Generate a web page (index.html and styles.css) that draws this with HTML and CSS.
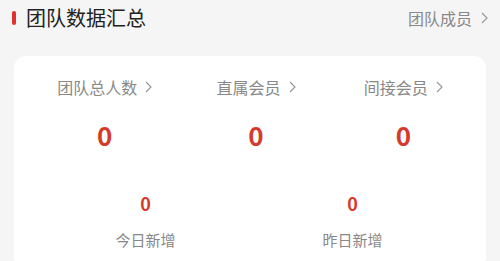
FILE: index.html
```html
<!DOCTYPE html>
<html lang="zh-CN">
<head>
<meta charset="utf-8">
<link rel="stylesheet" href="styles.css">
</head>
<body>
<div class="header">
  <div class="title"><span class="bar"></span>团队数据汇总</div>
  <div class="more">团队成员<svg class="chev" viewBox="0 0 7 12" width="7" height="12"><polyline points="1,1 6,6 1,11" fill="none" stroke="#999" stroke-width="1.2"/></svg></div>
</div>
<div class="card">
  <div class="row3">
    <div class="cell">
      <div class="label">团队总人数<svg class="chev" viewBox="0 0 7 12" width="7" height="12"><polyline points="1,1 6,6 1,11" fill="none" stroke="#999" stroke-width="1.2"/></svg></div>
      <div class="num">0</div>
    </div>
    <div class="cell">
      <div class="label">直属会员<svg class="chev" viewBox="0 0 7 12" width="7" height="12"><polyline points="1,1 6,6 1,11" fill="none" stroke="#999" stroke-width="1.2"/></svg></div>
      <div class="num">0</div>
    </div>
    <div class="cell">
      <div class="label">间接会员<svg class="chev" viewBox="0 0 7 12" width="7" height="12"><polyline points="1,1 6,6 1,11" fill="none" stroke="#999" stroke-width="1.2"/></svg></div>
      <div class="num">0</div>
    </div>
  </div>
  <div class="row2">
    <div class="cell">
      <div class="num-sm">0</div>
      <div class="label-sm">今日新增</div>
    </div>
    <div class="cell">
      <div class="num-sm">0</div>
      <div class="label-sm">昨日新增</div>
    </div>
  </div>
</div>
</body>
</html>
```
FILE: styles.css
```css
html, body {
  margin: 0;
  padding: 0;
  background: #f5f5f5;
  font-family: "Noto Sans CJK SC", "Noto Sans", sans-serif;
}
body {
  height: 261px;
  overflow: hidden;
}
.header {
  height: 36px;
  display: flex;
  align-items: center;
  justify-content: space-between;
  padding: 0 12px 0 12px;
}
.title {
  display: flex;
  align-items: center;
  font-size: 20px;
  color: #222;
  line-height: 26px;
}
.bar {
  display: inline-block;
  width: 4px;
  height: 14px;
  border-radius: 2px;
  background: #e0322a;
  margin-right: 10px;
}
.more {
  display: flex;
  align-items: center;
  font-size: 16px;
  color: #888;
  line-height: 22px;
}
.more .chev {
  margin-left: 9px;
}
.card {
  margin: 20px 14px 0 14px;
  background: #fff;
  border-radius: 12px;
  height: 212px;
}
.row3 {
  display: grid;
  grid-template-columns: repeat(3, 1fr);
  padding: 20px 8px 0 16px;
}
.cell {
  display: flex;
  flex-direction: column;
  align-items: center;
}
.row3 .cell:nth-child(2) {
  padding-left: 4px;
}
.label {
  display: flex;
  align-items: center;
  font-size: 16px;
  line-height: 22px;
  color: #888;
}
.label .chev {
  margin-left: 8px;
}
.num {
  margin-top: 22px;
  font-size: 26px;
  line-height: 30px;
  font-weight: 700;
  color: #d63a2c;
}
.row2 {
  display: grid;
  grid-template-columns: repeat(2, 1fr);
  padding: 41px 30px 0 28px;
}
.num-sm {
  font-size: 18px;
  line-height: 24px;
  font-weight: 700;
  color: #d63a2c;
}
.label-sm {
  margin-top: 15px;
  font-size: 15px;
  line-height: 20px;
  color: #888;
}
```
